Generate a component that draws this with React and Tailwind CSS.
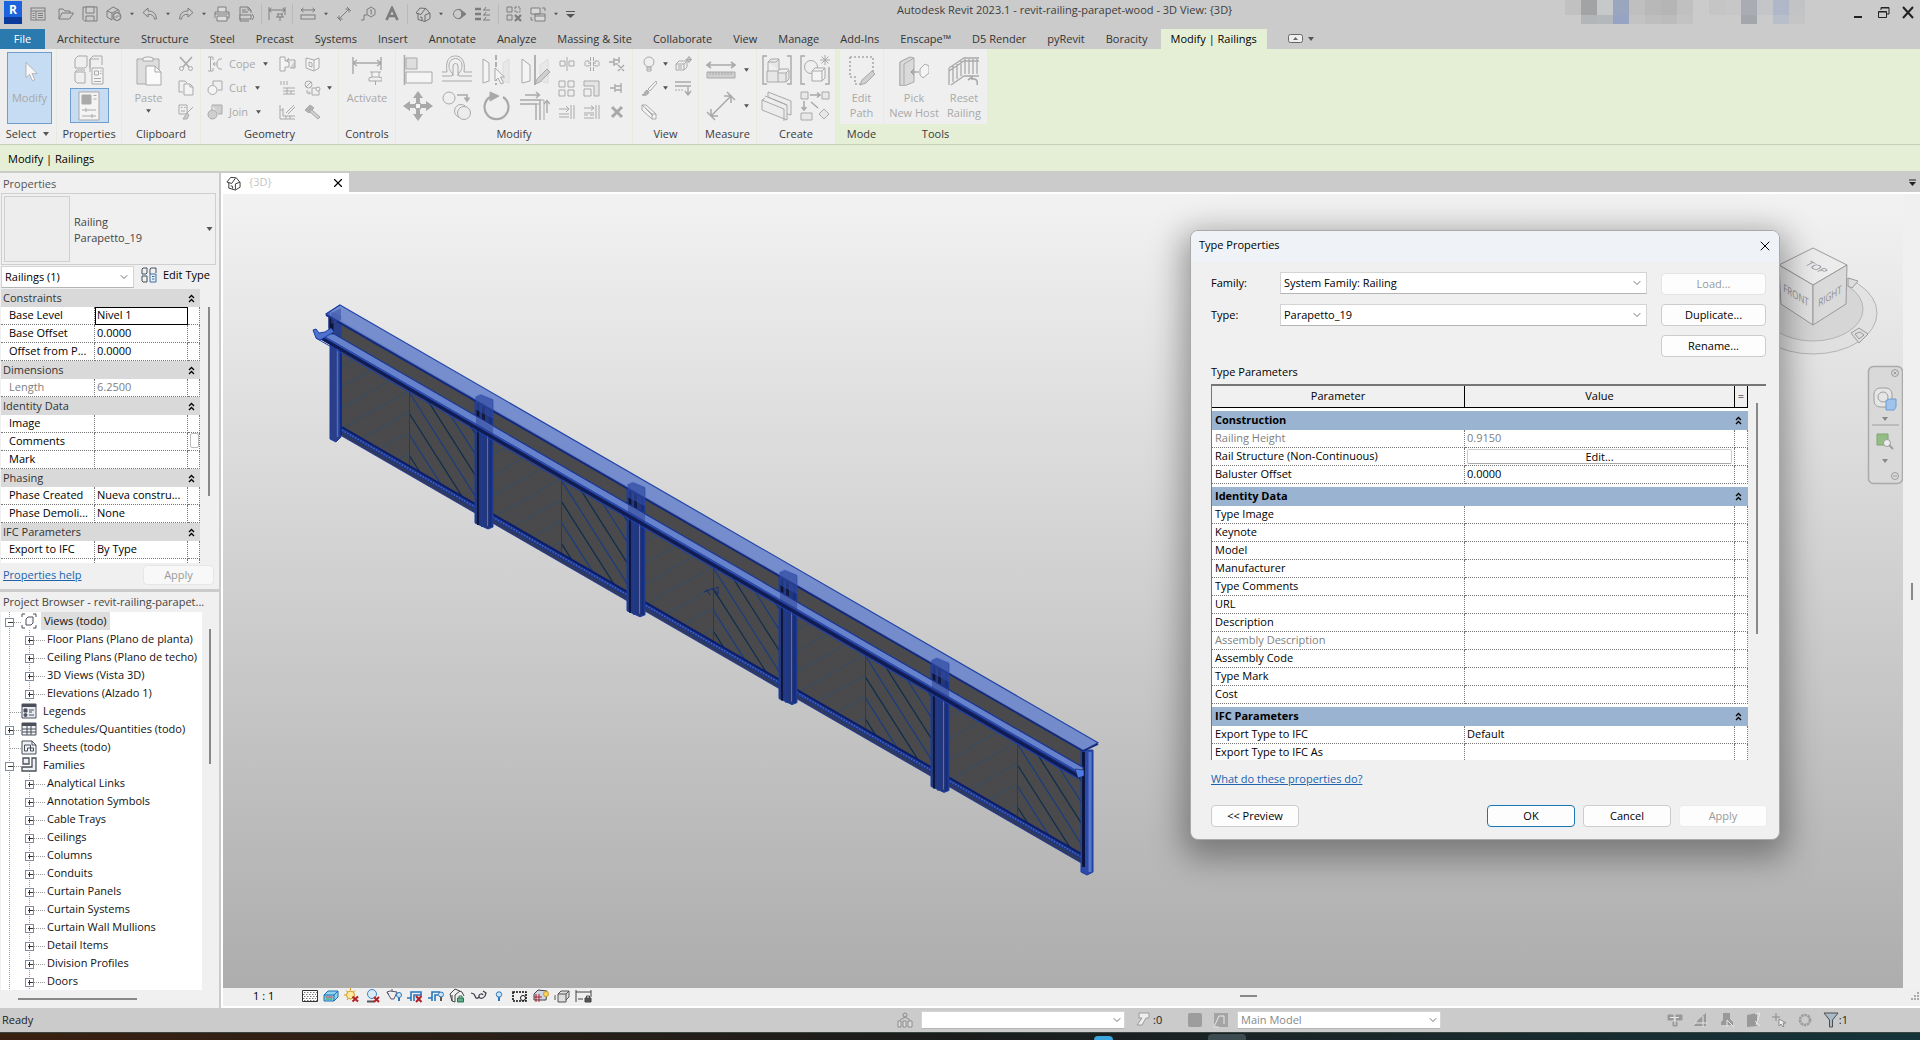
import { ChevronDown, X } from 'lucide-react'

const ui = "font-['Open_Sans','Noto_Sans',sans-serif]"

/* ---------- icons ---------- */

const L = '#f4f4f4'
const M = '#cfcfcf'

const icons = {
  home: [16, 16, <><rect x="1" y="2" width="14" height="12" /><path d="M1 5h14M6 5v9M2.500 7.500h2M2.500 9.500h2M2.500 11.500h2M8 7.500h5M8 9.500h5M8 11.500h5" /></>],
  open: [16, 16, <path d="M1 13V3h4l2 2h5v2M1 13l3-6h11.500l-4 6z" />],
  save: [16, 16, <><path d="M1 1h14v14H2.500L1 13.500z" /><path d="M4 1h8v6H4z" fill={M} /><path d="M4 15v-5h8v5" /></>],
  sync: [16, 16, <><path d="M1 5l6-4 6 3v3M1 5l5 2v7l-5-3zM6 7l6-3" /><circle cx="11" cy="10.500" r="4" fill="#aaa" /><path d="M9 10a2 2 0 013.500-1M13 11a2 2 0 01-3.500 1.200" stroke={L} /></>],
  undo: [16, 16, <path d="M1 6.500L6 2v3c5 0 8 2 8.500 8h-2C12 9.500 10 8.300 6 8.300V11z" />],
  redo: [16, 16, <path d="M15 6.500L10 2v3C5 5 2 7 1.500 13h2C4 9.500 6 8.300 10 8.300V11z" />],
  print: [16, 16, <><path d="M4 6V1h8v5M1 12V6h14v6h-2M3 10h10v5H3z" fill="#dcdcdc" /><path d="M1 8h14" /></>],
  pdf: [16, 16, <><path d="M2 15V1h8l3 3v3M10 1v3h3M4 4h4M4 6h6M2 15h9" /><path d="M2 9h11v4H2zM14 8l2 3-2 3" fill={M} /></>],
  pinDim: [18, 16, <><path d="M1 1v13M17 1v8M1 4h16M3.500 2L1 4l2.500 2M14.500 2L17 4l-2.500 2M9 8h6M10 8v3M14 8v3M8 11h8M12 11v4" /></>],
  rule: [16, 16, <><path d="M1 4h14M3.500 2L1 4l2.500 2M12.500 2L15 4l-2.500 2" /><rect x="1" y="9" width="14" height="4" fill={M} /></>],
  diag: [16, 16, <path d="M3 13L13 3M3 9.500V13h3.500M9.500 3H13v3.500M1 11l4 4M11 1l4 4" />],
  tag: [16, 16, <><path d="M11 1l4 2.500v5L11 11 7 8.500v-5zM1 14h3v-5h3" /><path d="M10 4.500l1.200-.7V8.500" /></>],
  letterA: [16, 16, <path d="M2.500 14L8 2l5.500 12M4.800 10h6.400" strokeWidth="2.600" />],
  house: [16, 16, <><path d="M1 7l4-5 6 .5 4 5v5l-5 3-7-2V7M1 7l5 1.500L10 3M10 15V9l5-2" /><path d="M5 11l2 .5V14" /></>],
  section: [16, 16, <><circle cx="7" cy="8" r="4.500" /><path d="M8.500 3l6.500 5-6.500 5c3-3 3-7 0-10z" fill="currentColor" /></>],
  thin: [16, 16, <><path d="M0 3h6M0 8h6M0 13h6" strokeWidth="2.600" /><path d="M8 4h7M8 9h7M8 14h7M11 1l-2 3M11 6l-2 3M11 11l-2 3" /></>],
  closeHidden: [16, 16, <><path d="M1 1h5v5H1z M1 9h5v5H1z" /><path d="M9 1h5v5H9z" strokeDasharray="2 1" /><path d="M9 9l6 6M15 9l-6 6" strokeWidth="2.200" /></>],
  switchWin: [16, 16, <><path d="M1 2h9v6H1zM5 8h10v7H5z" fill="#d8d8d8" /><path d="M5 10h10M12 2h3v3M1 11v3h2" /></>],
  arrow: [30, 30, <path d="M10 3v19l4.500-4 3.500 8 3-1.500-3.500-7.500H24z" fill="#f7f7f7" />],
  boxes: [30, 30, <><path d="M1 4l3-3h9v10l-2 2H1zM16 4l3-3h9v9M16 4v9M1 17h10v11H3l-2-2zM16 17V4h9" /><path d="M1 17l2-2h8" /><path d="M18 13h11v16H18z" fill={L} /><path d="M20.500 16h4v4h-4zM26 16h1.500M26 18.500h1.500M20 23.500h7M20 26.500h7" /></>],
  sheet: [22, 30, <><path d="M1 1h20v28H1z" fill={L} /><path d="M4 4h9v9H4z" fill="#aaa" /><path d="M15.500 4.500h3M15.500 8h3M4 19h14M8 17v4M4 25h14M14 23v4" /></>],
  paste: [26, 30, <><path d="M1 3h22v25H1z" fill="#dedede" /><path d="M7 5V2l3-1h4l3 1v3z" fill={L} /><path d="M10 10h9l6 6v13H10z" fill="#fafafa" /><path d="M19 10v6h6" /></>],
  cut: [16, 16, <><path d="M2 1l9 10M14 1L5 11" strokeWidth="1.600" /><circle cx="3.500" cy="12.500" r="2" /><circle cx="12.500" cy="12.500" r="2" /></>],
  copyPages: [16, 16, <><path d="M1 12V1h6l2 2M1 12h4" /><path d="M6 4h6l3 3v8H6zM12 4v3h3" fill={L} /></>],
  matchType: [16, 16, <><path d="M1 1h8v9H1zM3 3.500h1.500M3 7h4M6 3.500h1.500" /><path d="M15 3l-6 6M9 9l-4 6h4l2-4z" fill={M} /></>],
  cope: [16, 16, <path d="M1 1h5M1 15h5M3.500 1v14M6 1v3M6 15v-3M15 3h-3l-2 3v4l2 3h3M6 8h4M8 6L6 8l2 2" />],
  cutGeo: [16, 16, <><path d="M6 1h9v9h-4M6 1v4" /><circle cx="5.500" cy="10" r="4.500" fill={L} /></>],
  joinGeo: [16, 16, <><path d="M5 1h10v9h-4M5 1v5" fill={M} /><circle cx="5.500" cy="10.500" r="4.500" fill={M} /></>],
  wallOpen: [17, 16, <><path d="M1 1h5v4h4v6H6v4H1z" fill={L} /><path d="M16 4H8M10 2L7.500 4.500 10 7M16 4v8h-5" fill={M} /></>],
  beam: [17, 16, <path d="M2 1v4M5 1v4M8 1v4M4 8h12M4 11h12M8 8v6M4 14h12M12 11v3" />],
  demolishL: [17, 16, <path d="M1 1v14h15M4 4v8h12M7 9l8-8M9 10l7-7M1 6h3M7 12v3M11 12v3" />],
  wallJoin: [16, 16, <path d="M1 2l8 2v11l-8-3zM9 4l5-2v10l-5 3M4 6l3 1v4l-3-1z" fill={L} />],
  splitFace: [17, 16, <><circle cx="4.500" cy="4.500" r="3.500" /><path d="M2 7l5-5M8 8h7v7H8zM3 10v3h3M5 11.500L6.500 13 5 14.500" /><circle cx="14" cy="9" r="2" fill={L} /></>],
  hammer: [17, 16, <><path d="M1 6l5-5 4 3-5 5z" fill="#b0b0b0" /><path d="M8 6l8 7-2 2-8-7" fill={M} /></>],
  activate: [30, 30, <><path d="M1 1v17M29 1v13M1 7h28M5 4L1 7l4 3M25 4l4 3-4 3" strokeWidth="1.400" /><path d="M18 16h11M20 16v5h7v-5M17 25v-3l3-1M30 25v-3l-3-1M17 25h13M23.500 25v4" fill={L} /></>],
  align: [30, 30, <><path d="M1.500 0v30" strokeWidth="1.600" /><path d="M3 3h11v11H3z" fill="#dedede" /><path d="M3 17h26v11H3z" fill={L} /></>],
  offset: [30, 30, <><path d="M0 21h9c2 0 2-2 1-3-3-3-3-6-3-8a6.500 6.500 0 0113 0c0 2 0 5-3 8-1 1-1 3 1 3h12" /><path d="M0 26h30" /><path d="M0 17h5c-2-14 4-16 8.500-16S24 4 22 17h8" /><path d="M11 21V11a2.500 2.500 0 015 0v10" /></>],
  mirrorPick: [30, 30, <><path d="M2 4l6 4v18l-6 2z" fill={L} /><path d="M28 4l-6 4v18l6 2z" stroke="#dcdcdc" fill="#e8e8e8" /><path d="M15 0v30" strokeWidth="1.800" strokeDasharray="5 2" /><path d="M14 13v13l3-3 3 6 2.500-1-3-6h4z" fill={L} /></>],
  mirrorDraw: [30, 30, <><path d="M2 4l8 6v16l-8 2z" fill={L} /><path d="M28 4l-8 6v16l8 2z" stroke="#dcdcdc" fill="#e8e8e8" /><path d="M15 0v30" strokeWidth="1.800" /><path d="M15 29l2-5 10-10 3 3-10 10z" fill={M} /></>],
  move: [30, 30, <><path d="M15 0l5 7h-3v5h-4V7h-3zM15 30l5-7h-3v-5h-4v5h-3zM0 15l7-5v3h5v4H7v3zM30 15l-7-5v3h-5v4h5v3z" fill="currentColor" stroke="none" /><rect x="12.500" y="12.500" width="5" height="5" fill={L} /></>],
  copy: [30, 30, <><circle cx="7" cy="7" r="6" /><circle cx="19" cy="20" r="6.500" /><circle cx="22" cy="22" r="6.500" fill="#ececec" /><path d="M15 4h10v5M22.500 6.500L25 10l2.500-3.500" strokeWidth="1.600" /></>],
  rotate: [30, 30, <><path d="M9 6A12 12 0 1022 6" strokeWidth="2.200" /><path d="M9 1l9 4-9 5z" fill="currentColor" /></>],
  trim: [30, 30, <><path d="M0 9h20v20M0 13h16v16" strokeWidth="1.400" /><path d="M5 4h14M16 1l3.500 3L16 7M27 22V10M24 13l3-3.500 3 3.500" strokeWidth="1.400" /><path d="M20 9h4v20M16 13h4" /></>],
  splitEl: [16, 16, <path d="M1 5h5v5H1zM10 5h5v5h-5zM8 1v14" />],
  splitGap: [16, 16, <path d="M5 5H1v5h4zM11 5h4v5h-4zM6.500 1v14M9.500 1v14" strokeDasharray="4 1" />],
  unpin: [17, 16, <path d="M1 6h5M6 2v8M6 4h5M6 8h4M11 1v6M10 9l6 6M16 9l-6 6" strokeWidth="1.400" />],
  array: [17, 17, <path d="M1 1h6v6H1zM10 1h6v6h-6zM1 10h6v6H1zM10 10h6v6h-6z" />],
  scale: [17, 17, <><path d="M1 1h15v15h-5V6H1z" fill="#e4e4e4" /><path d="M1 9h7v7H1z" /></>],
  pin: [16, 16, <path d="M1 8h5M6 4v8M6 6h6M6 10h6M12 3v10" strokeWidth="1.300" />],
  trim1: [17, 16, <path d="M1 5h10M8 2l3 3-3 3M13 1v14M16 1v14M1 10h10M1 13h10" />],
  trimN: [17, 16, <path d="M1 4h10M8 1.500L11 4 8 6.500M13 1v14M16 1v14M1 9h10M1 11h4M7 11h4M1 14h10" />],
  del: [16, 16, <path d="M3 3l10 10M13 3L3 13" strokeWidth="3" />],
  bulb: [16, 16, <><circle cx="8" cy="6" r="5" /><path d="M6 11h4v4H6zM6 13h4" /></>],
  brush: [16, 16, <><path d="M15 1l-8 8 2 2 7-8z" fill={L} /><path d="M1 15c3 0 2-4 5-5l2 2c-1 3-4 4-7 3z" fill="#b0b0b0" /></>],
  displace: [17, 16, <><path d="M1 8l3-3h8v6l-3 3H1zM1 8h8v6M9 8l3-3M4 9v4M6 9v4" /><circle cx="14" cy="3.500" r="2" /><path d="M14 0v7M10.500 3.500H17" /></>],
  lineWork: [17, 16, <><path d="M0 2h16M0 6h16" strokeWidth="1.600" /><path d="M0 10h8" strokeDasharray="2 1" /><path d="M13 7v7M10 11l3 4 3-4" strokeWidth="1.400" /></>],
  beamBox: [16, 16, <><path d="M1 1h4l10 9v5h-4L1 6z" fill={L} /><path d="M1 1l10 9h4M11 10v5M4 4l8 8" /></>],
  measure: [30, 18, <><path d="M1 4h28M5 1L1 4l4 3M25 1l4 3-4 3" strokeWidth="1.600" /><path d="M1 11h28v6H1z" fill={M} /><path d="M4 11v3M7 11v3M10 11v3M13 11v3M16 11v3M19 11v3M22 11v3M25 11v3" /></>],
  bigDiag: [30, 30, <path d="M6 24L24 6M5 18v7h7M18 5h7v7M1 21l8 8M21 1l8 8" strokeWidth="1.500" />],
  group: [30, 30, <><path d="M5 1H1v28h4M25 1h4v28h-4" strokeWidth="1.400" /><path d="M6 7l3-3h8v11M6 7v9M6 7h8l3-3M5 16h11v11H5zM16 18h8v9h-8M24 18l3-3v9l-3 3M16 16l2-2h9" fill="#e6e6e6" /></>],
  assembly: [30, 30, <><path d="M5 1H1v28h4M25 29h4V12" strokeWidth="1.400" /><circle cx="11" cy="12" r="6.500" /><path d="M12 16l3-3h10v10l-3 3H12z" fill={L} /><path d="M12 16h10v10M22 16l3-3" /><path d="M25 0v10M20 5h10M21.500 1.500l7 7M28.500 1.500l-7 7" /></>],
  parts: [32, 30, <path d="M7 1l23 9v14l-4-1M7 1v5l19 8v15L1 19V9l22 9v12M1 9l3-2M4 5l22 9" fill="#ececec" />],
  similar: [30, 30, <><path d="M1 1h7v7H1zM22 1h7v7h-7zM1 22h11v7H1zM24 18l5 5-5 5-5-5z" fill="#e8e8e8" /><path d="M10 4h10M17 1.500L20 4l-3 2.500M4 10v9M1.500 16L4 19l2.500-3M11 11l7 6" strokeWidth="1.500" /></>],
  editPath: [26, 30, <><path d="M1 1h23v20M1 1v20h5v7h7" strokeDasharray="2 2" strokeWidth="1.600" /><path d="M11 29l2-5 10-9 3 3-9 9z" fill={M} /></>],
  pickHost: [30, 30, <><path d="M1 6l10-5v24l-10 5z" fill="#b8b8b8" /><path d="M1 6L11 1l4 1v24L5 30 1 29zM5 8v21M5 8l10-6" fill="#dadada" /><path d="M12 16h8M15 13l-3 3 3 3" stroke="#8f8f8f" /><path d="M21 13l5-5 4 2v7l-6 5-3-3z" fill={L} /></>],
  resetRail: [32, 30, <><path d="M1 12L16 2h15M1 15L16 5h15M1 29V12M5 26V10M9 23V8M13 20V5M17 18V3M21 18V3M25 18V3M29 18V3M3 29l13-9h15" strokeWidth="1.300" /><path d="M20 24l4-3v2c5-1 6 3 5 6" strokeWidth="1.600" /></>],
  editType: [16, 16, <><path d="M1 2l1-1h4v5L5 7H1zM9 2l1-1h5v5M9 7V2M1 9h5v6H2l-1-1z" stroke="#44515f" /><path d="M9 7h6v8H9z" fill="#e6f1fb" stroke="#3c6c9c" /><path d="M11 9.500h2.500M11 12h2.500" stroke="#3c6c9c" /></>],
  views: [16, 16, <path d="M1 4V1h3M12 1h3v3M1 12v3h3M12 15h3v-3M5 6l2-2h5v6l-2 2H5z" />],
  legends: [16, 16, <><path d="M1 1h14v14H1z" fill="#e8ecf2" /><path d="M1 2.500h14" strokeWidth="3" /><path d="M3 6h3v3H3z" fill="#556" /><circle cx="4.500" cy="12" r="1.500" fill="#556" /><path d="M8 7h5M8 9h3M8 12h5" /></>],
  schedules: [16, 16, <><path d="M1 2h14v12H1z" fill="#eef1f5" /><path d="M1 3.500h14" strokeWidth="3" /><path d="M1 8h14M1 11h14M6 5v9M10 5v9" /></>],
  sheets: [16, 16, <path d="M1 2h10l4 4v9H1zM11 2v4h4M3.500 6h6v3h-3v3h-3zM9.500 12V9h3v3z" fill="#eef1f5" />],
  families: [16, 16, <path d="M2 1h6v6H2zM11 1h4v13H1v-4h10z" fill="#eef1f5" strokeWidth="1.300" />],
  graphic: [16, 16, <><path d="M.5 2.500h15v11H.5z" fill="#fff" stroke="#333" /><path d="M2 4.500h13M1 6.500h13M2 8.500h13M1 10.500h13M2 12.500h13" stroke="#777" strokeDasharray="1.500 1.500" /></>],
  style: [16, 16, <><path d="M1 7l4-4h10v6l-4 4H1z" fill="#8fd3ef" stroke="#1d6fb0" /><path d="M1 7h10v6M11 7l4-4" stroke="#1d6fb0" /><path d="M2.500 9h7" stroke="#d33" /><path d="M2.500 11h7" stroke="#2a4" /></>],
  sun: [16, 16, <><circle cx="6.500" cy="7" r="4" fill="#fde9a0" stroke="#d19a1c" /><path d="M6.500 0v2M0 7h2M2 2.500L3.500 4M11 2.500L9.500 4M3 12l1-1.500" stroke="#d19a1c" /><path d="M8.500 8.500l5.500 5M14 8.500l-5.500 5" stroke="#b3202a" strokeWidth="2" /></>],
  shadow: [16, 16, <><circle cx="7" cy="6" r="4.500" fill="#d9eaf8" stroke="#3b82c4" /><path d="M2 13.500h7" stroke="#555" strokeWidth="2" /><path d="M9 9l5 5M14 9l-5 5" stroke="#b3202a" strokeWidth="2" /></>],
  render: [17, 16, <><path d="M1 4l3-1 7 1-3 7H5zM1 4l2 3M6 1v2" stroke="#556" /><circle cx="13" cy="7" r="2.500" fill="#cfe6f8" stroke="#2878bd" /><path d="M12 10h2v3h-2z" fill="#2878bd" stroke="none" /></>],
  cropX: [16, 16, <><path d="M0 10h4v3M4 13V4h10v3M7 13V7h8" stroke="#2878bd" strokeWidth="1.600" /><path d="M9 8l5.500 6M14.500 8L9 14" stroke="#b3202a" strokeWidth="2" /></>],
  cropB: [16, 16, <><path d="M0 10h4v3M4 13V4h8M7 13V7h3" stroke="#2878bd" strokeWidth="1.600" /><circle cx="13" cy="6.500" r="2.500" fill="#cfe6f8" stroke="#2878bd" /><path d="M13 9v4" stroke="#555" strokeWidth="2" /></>],
  lockView: [16, 16, <><path d="M1 6l5-5 7 3 2 4M1 6l2 7 3 1V7l5-4M3 7v6" stroke="#444" /><path d="M8.500 10h6v4h-6z" fill="#5fae8c" stroke="#2f6f55" /><path d="M10 10V8h3v2" stroke="#2f6f55" /></>],
  glasses: [17, 16, <path d="M1 5l3 1M4 6l2 4c2 1 3-1 3-2M9 8c0-2 3-3 4-1M9 9c1 2 4 2 6-1l1-3-3-2" stroke="#445" strokeWidth="1.300" />],
  tip: [16, 16, <><circle cx="8" cy="6.500" r="2.700" fill="#cfe6f8" stroke="#2878bd" /><path d="M8 9v4" stroke="#2878bd" strokeWidth="2" /></>],
  analytic: [16, 16, <><path d="M1 4h13v9H1z" stroke="#111" strokeDasharray="2 1" strokeWidth="1.600" /><circle cx="11" cy="10" r="2.500" stroke="#111" fill="#fff" /></>],
  displaceSet: [17, 16, <><path d="M1 6l4-4 9 1-1 9H1z" stroke="#444" fill="#cdd6e4" /><path d="M3 6v8M6 6v8M1 9h8" stroke="#b3202a" /><circle cx="13" cy="6" r="2.500" fill="#f8d568" stroke="#d19a1c" /></>],
  constraint: [16, 16, <path d="M4 6l3-3h8v6l-3 3M4 6h8v8H4zM12 6l3-3M1 7v5" stroke="#555" fill="#ddd" />],
  dimLock: [17, 16, <><path d="M1 2v12M1 4h15M16 2v7M3 11h5" stroke="#444" /><path d="M10 10h6v4h-6z" fill="#555" stroke="#444" /><path d="M11.500 10V8h3v2" stroke="#444" /></>],
  people: [16, 16, <><path d="M1 15V9h3v6zM6 15V9h3v6zM11 15V9h4v6z" fill="#ddd" stroke="#8c8c8c" /><circle cx="8" cy="3" r="2" stroke="#8c8c8c" /><path d="M3 8l5-3 5 3" stroke="#8c8c8c" /></>],
  request: [16, 16, <path d="M4 1h10v5h-3l-4 7H2l5-7H4z" fill="#eee" stroke="#9a9a9a" />],
  block: [16, 16, <rect x="1" y="1" width="14" height="14" rx="2" fill="#9d9d9d" stroke="none" />],
  blockOut: [16, 16, <><rect x="1" y="1" width="14" height="14" fill="#a4a4a4" stroke="none" /><path d="M6 4h5v8M6 4L1 15h5" stroke="#e8e8e8" /></>],
  selLink: [16, 16, <><path d="M1 3h5v5H1zM9 3h6v5H9zM6 10h4v4H6z" fill="#999" stroke="#999" /><path d="M3 5.500h9M8 6v7" stroke="#e8e8e8" /></>],
  selUnder: [16, 16, <><path d="M1 14l4-6 8-7v13z" fill="#999" stroke="none" /><path d="M2 11h12M10 4v11" stroke="#e8e8e8" /></>],
  selPin: [16, 16, <><path d="M4 1h7v6l3 3v3H2v-3l2-2z" fill="#999" stroke="none" /><path d="M8 8l7 7M8 8v7" stroke="#e8e8e8" /></>],
  selFace: [16, 16, <><path d="M2 3l10-2v13l-10 1z" fill="#999" stroke="none" /><path d="M10 2l5-1-4 12M10 9l5 5" stroke="#e8e8e8" /></>],
  drag: [16, 16, <path d="M5 1v8M1 5h8M8 7v7l2-2 2 3 1-1-1-3h3z" stroke="#8c8c8c" fill="#f0f0f0" />],
  gear: [16, 16, <circle cx="8" cy="8" r="5" stroke="#9c9c9c" strokeWidth="2.600" strokeDasharray="2.500 .7" />],
  funnel: [16, 16, <path d="M1 1h14L9.500 8v7h-3V8z" fill="#a9bac9" stroke="#4c4c4c" />],
}

function Ico({ n, className = '' }) {
  const [w, h, body] = icons[n]
  return (
    <svg width={w} height={h} viewBox={`0 0 ${w} ${h}`} fill="none" stroke="currentColor" className={`shrink-0 ${className}`}>
      {body}
    </svg>
  )
}

const Caret = ({ className = '' }) => (
  <svg width="6" height="4" viewBox="0 0 6 4" className={`shrink-0 ${className}`}><path d="M0 0h6L3 4z" fill="#555" /></svg>
)

const Chevrons = () => (
  <svg width="7" height="9" viewBox="0 0 7 9" fill="none" stroke="#000" strokeWidth="1.300"><path d="M1 4l2.500-2.500L6 4M1 8l2.500-2.500L6 8" /></svg>
)

/* ---------- title bar and tabs ---------- */

const quick = ['home', 'gap', 'open', 'save', 'sync', 'v', 'undo', 'v', 'redo', 'v', 'print', 'pdf', '|', 'pinDim', '|', 'rule', 'v', 'diag', 'tag', 'letterA', '|', 'house', 'v', 'section', 'thin', '|', 'closeHidden', 'switchWin', 'v']

const pixels = [
  ['bg-[#c1c1c1]', 'bg-transparent'], ['bg-[#a1a3a4]', 'bg-[#b3b6b8]'], ['bg-[#c6c9ca]', 'bg-[#b3b8bb]'],
  ['bg-[#9aa5be]', 'bg-[#96a3c2]'], ['bg-[#bfbfbf]', 'bg-[#c3c3c3]'], ['bg-[#b8b8b8]', 'bg-[#bebebe]'],
  ['bg-[#b5b5b5]', 'bg-[#bcbcbc]'], ['bg-[#c0c0c0]', 'bg-[#c3c3c3]'], ['bg-transparent', 'bg-transparent'],
  ['bg-[#c5c5c5]', 'bg-transparent'], ['bg-[#c7c7c7]', 'bg-transparent'], ['bg-[#a9adb3]', 'bg-[#a3a7ab]'],
  ['bg-[#c4c5c8]', 'bg-transparent'], ['bg-[#b0b7c8]', 'bg-[#b9bfca]'], ['bg-[#c2c3c5]', 'bg-[#c5c5c5]'],
]

function TitleBar() {
  return (
    <header className="flex h-[29px] shrink-0 items-start">
      <div className="flex w-[897px] shrink-0 items-center gap-2 pt-1 text-[#7c7c7c]">
        <div className="ml-1 -mt-1 flex h-[23px] w-[18px] justify-center bg-linear-to-b from-[#1c63e0] from-70% to-[#0b3c9c] to-70% text-[12px] leading-[18px] font-bold text-white">R</div>
        {quick.map((q, i) => {
          if (q === 'v') return <Caret key={i} className="w-1" />
          if (q === '|') return <span key={i} className="-mx-px h-5 w-px bg-[#b9b9b9]" />
          if (q === 'gap') return <span key={i} className="-mx-0.5" />
          return (
            <button key={i} aria-label={q} className="flex w-4 justify-center"><Ico n={q} className={q === 'house' ? 'text-[#6d6d6d]' : ''} /></button>
          )
        })}
        <button aria-label="Customize toolbar"><svg width="9" height="7"><path d="M0 .5h9" stroke="#555" /><path d="M0 3h9L4.500 7z" fill="#555" /></svg></button>
      </div>
      <h1 className="pt-0.5 text-[11px] leading-[16px] text-[#3d3d3d]">Autodesk Revit 2023.1 - revit-railing-parapet-wood - 3D View: {'{3D}'}</h1>
      <div className="flex flex-1 items-start justify-end">
        <div className="mr-12 flex">
          {pixels.map(([a, b], i) => (
            <div key={i} className="w-4"><div className={`h-[15px] ${a}`} /><div className={`h-[9px] ${b}`} /></div>
          ))}
        </div>
        <div className="flex items-center gap-3 pt-1.5 pr-1.5 text-[#222]">
          <button aria-label="Minimize"><svg width="12" height="13"><path d="M1 11h8" stroke="currentColor" strokeWidth="2" /></svg></button>
          <button aria-label="Restore"><svg width="13" height="13" fill="none" stroke="currentColor"><path d="M4 4V1.500h8V8H9.500M4 2h8M1.500 5.500h8v6h-8zM1.500 6h8" /></svg></button>
          <button aria-label="Close"><svg width="12" height="13"><path d="M1 1l10 11M11 1L1 12" stroke="currentColor" strokeWidth="2" /></svg></button>
        </div>
      </div>
    </header>
  )
}

const tabs = ['Architecture', 'Structure', 'Steel', 'Precast', 'Systems', 'Insert', 'Annotate', 'Analyze', 'Massing & Site', 'Collaborate', 'View', 'Manage', 'Add-Ins', 'Enscape™', 'D5 Render', 'pyRevit', 'Boracity']

function Tabs() {
  return (
    <nav className="flex h-5 shrink-0 gap-px text-[11px] leading-5 text-[#333]">
      <button className="mr-px w-[45px] bg-[#2a7ab0] text-white">File</button>
      {tabs.map((t) => <button key={t} className="px-2.5">{t}</button>)}
      <button className="ml-0.5 bg-[#e5efd6] px-2.5 text-black">Modify | Railings</button>
      <button aria-label="Ribbon display" className="ml-5 flex items-center gap-1">
        <svg width="16" height="10" fill="none" stroke="#666"><rect x=".5" y=".5" width="14" height="8" rx="2" fill="#eee" /><path d="M5 6l2.500-3L10 6z" fill="#666" stroke="none" /></svg>
        <Caret />
      </button>
    </nav>
  )
}

/* ---------- ribbon ---------- */

function Panel({ label, width, children, green, arrow }) {
  return (
    <section className={`flex flex-col ${width} ${green ? '' : 'border-r border-[#e6ebdf] bg-[#efefef]'}`}>
      <div className={`flex h-[75px] pt-[3px] text-[#a9a9a9] ${green ? 'bg-[#efefef]' : ''}`}>{children}</div>
      <div className="flex items-center justify-center gap-1.5 leading-[19px] text-[#3b3b3b]">{label}{arrow && <Caret className="w-2" />}</div>
    </section>
  )
}

// a column of two large icons or three small ones; "v" after a name adds a menu caret
function Col({ names, width, big }) {
  return (
    <div className={`flex flex-col ${width}`}>
      {names.map((n) => {
        const [id, v] = n.split(' ')
        return (
          <button key={id} aria-label={id} className={`flex items-center justify-center gap-2 ${big ? 'h-9' : 'h-6'}`}>
            <Ico n={id} />{v && <Caret className="w-[5px]" />}
          </button>
        )
      })}
    </div>
  )
}

function Big({ icon, lines, width, caret }) {
  return (
    <button className={`flex flex-col items-center leading-[15px] ${width}`}>
      <span className="flex h-[38px] items-center"><Ico n={icon} /></span>
      {lines.map((l) => <span key={l} className="whitespace-nowrap">{l}</span>)}
      {caret && <Caret className="mt-1 w-[5px]" />}
    </button>
  )
}

function Ribbon() {
  return (
    <div className="flex h-[96px] shrink-0 border-b border-[#c6cfba] bg-[#e5efd6] text-[11px]">
      <Panel label="Select" width="w-[57px]" arrow>
        <button className="ml-[7px] flex h-[72px] w-[45px] flex-col items-center border border-[#6f9dcd] bg-[#c5dcf2] leading-[15px]">
          <span className="flex h-[37px] items-center"><Ico n="arrow" className="w-[24px]" /></span>Modify
        </button>
      </Panel>
      <Panel label="Properties" width="w-[65px]">
        <div className="flex flex-1 flex-col items-center">
          <button aria-label="Type properties" className="flex h-9 items-center"><Ico n="boxes" /></button>
          <button aria-label="Properties palette" className="flex h-[35px] w-[39px] items-center justify-center border border-[#6f9dcd] bg-[#c5dcf2]"><Ico n="sheet" /></button>
        </div>
      </Panel>
      <Panel label="Clipboard" width="w-[79px]">
        <Big icon="paste" lines={['Paste']} width="ml-[5px] w-[43px]" caret />
        <Col names={['cut', 'copyPages', 'matchType']} width="ml-2 w-4" />
      </Panel>
      <Panel label="Geometry" width="w-[138px]">
        <div className="ml-1.5 flex w-[72px] flex-col">
          {[['cope', 'Cope'], ['cutGeo', 'Cut'], ['joinGeo', 'Join']].map(([n, t]) => (
            <button key={t} className="flex h-6 items-center"><Ico n={n} /><span className="ml-1.5">{t}</span><Caret className="ml-2 w-[5px]" /></button>
          ))}
        </div>
        <Col names={['wallOpen', 'beam', 'demolishL']} width="w-[17px]" />
        <Col names={['wallJoin', 'splitFace', 'hammer']} width="ml-2 w-[17px]" />
        <button aria-label="Paint options" className="ml-1.5 flex h-[72px] items-center"><Caret className="w-[5px]" /></button>
      </Panel>
      <Panel label="Controls" width="w-[57px]"><Big icon="activate" lines={['Activate']} width="w-full" /></Panel>
      <Panel label="Modify" width="w-[237px]">
        <Col big names={['align', 'move']} width="ml-0.5 w-[39px]" />
        <Col big names={['offset', 'copy']} width="w-[39px]" />
        <Col big names={['mirrorPick', 'rotate']} width="w-[39px]" />
        <Col big names={['mirrorDraw', 'trim']} width="w-[39px]" />
        <Col names={['splitEl', 'array', 'trim1']} width="w-[25px]" />
        <Col names={['splitGap', 'scale', 'trimN']} width="w-[25px]" />
        <Col names={['unpin', 'pin', 'del']} width="w-[25px]" />
      </Panel>
      <Panel label="View" width="w-[66px]">
        <div className="flex w-[42px] flex-col items-start pl-2">
          {['bulb', 'brush', 'beamBox'].map((n, i) => (
            <button key={n} aria-label={n} className="flex h-6 items-center gap-1.5"><Ico n={n} />{i < 2 && <Caret className="w-[5px]" />}</button>
          ))}
        </div>
        <Col names={['displace', 'lineWork']} width="w-[17px]" />
      </Panel>
      <Panel label="Measure" width="w-[58px]"><Col big names={['measure v', 'bigDiag v']} width="w-full" /></Panel>
      <Panel label="Create" width="w-[79px]">
        <Col big names={['group', 'parts']} width="ml-px w-[38px]" />
        <Col big names={['assembly', 'similar']} width="w-[38px]" />
      </Panel>
      <div className="w-1" />
      <Panel green label="Mode" width="w-[43px]"><Big icon="editPath" lines={['Edit', 'Path']} width="w-full" /></Panel>
      <div className="w-px" />
      <Panel green label="Tools" width="w-[103px]">
        <Big icon="pickHost" lines={['Pick', 'New Host']} width="w-[60px]" />
        <Big icon="resetRail" lines={['Reset', 'Railing']} width="w-[40px]" />
      </Panel>
    </div>
  )
}

/* ---------- left palettes ---------- */

const props = [
  ['Constraints'], ['Base Level', 'Nivel 1'], ['Base Offset', '0.0000'], ['Offset from P...', '0.0000'],
  ['Dimensions'], ['Length', '6.2500'],
  ['Identity Data'], ['Image', ''], ['Comments', ''], ['Mark', ''],
  ['Phasing'], ['Phase Created', 'Nueva constru...'], ['Phase Demoli...', 'None'],
  ['IFC Parameters'], ['Export to IFC', 'By Type'], ['', ''],
]

const cell = 'border-r border-b border-dotted border-[#777] p-0 align-top leading-[15px] whitespace-nowrap'

function Select({ label, options, className, chevron = 'right-1.5' }) {
  return (
    <div className={`relative ${className}`}>
      <select aria-label={label} className="size-full appearance-none border border-[#d4d4d4] border-b-[#b5b5b5] bg-white pl-[3px]">
        {options.map((o) => <option key={o}>{o}</option>)}
      </select>
      <ChevronDown size={12} strokeWidth={1.500} className={`pointer-events-none absolute top-1/2 -translate-y-1/2 text-[#444] ${chevron}`} />
    </div>
  )
}

function Properties() {
  return (
    <section className="flex h-[416px] shrink-0 flex-col">
      <h2 className="h-5 pl-[3px] leading-[21px] text-[#555]">Properties</h2>
      <button className="mx-px mr-[3px] flex h-[72px] items-center border border-[#cfcfcf] text-left text-[#444]">
        <span className="ml-0.5 size-[66px] border border-[#cfcfcf] bg-[#ededed]" />
        <span className="ml-1 flex-1 pt-0.5 leading-4">Railing<br />Parapetto_19</span>
        <Caret className="mr-0.5 w-[7px]" />
      </button>
      <div className="flex h-6 items-center">
        <Select label="Element filter" options={['Railings (1)']} className="ml-px h-[22px] w-[133px]" chevron="right-1" />
        <button className="ml-[7px] flex items-center gap-1.5 pb-1 text-black"><Ico n="editType" />Edit Type</button>
      </div>
      <div className="flex h-[274px] overflow-hidden">
        <table className="ml-px w-[199px] table-fixed border-separate border-spacing-0 self-start bg-white">
          <colgroup><col className="w-[94px]" /><col className="w-[93px]" /><col className="w-3" /></colgroup>
          <tbody>
            {props.map(([k, v], i) => v === undefined ? (
              <tr key={i} className="h-[18px] bg-[#d9d9d9]">
                <th colSpan={2} className="p-0 pl-0.5 text-left align-top leading-[17px] font-normal text-[#333]">{k}</th>
                <td className="p-0"><button aria-label={`Collapse ${k}`} className="flex items-center"><Chevrons /></button></td>
              </tr>
            ) : (
              <tr key={i} className={`h-[18px] ${k === 'Length' ? 'text-[#808080]' : 'text-black'}`}>
                <td className={`${cell} pl-2`}>{k}</td>
                <td className={`pl-0.5 ${v === 'Nivel 1' ? 'border border-black p-0 pl-px align-top leading-[14px]' : cell}`}>{v}</td>
                <td className={cell}>
                  {k === 'Comments' && <button aria-label="Edit comments" className="ml-0.5 block h-[15px] w-[9px] rounded-xs border border-[#bbb]" />}
                </td>
              </tr>
            ))}
          </tbody>
        </table>
        <div className="mt-[18px] ml-2 h-[189px] w-0.5 bg-[#888]" />
      </div>
      <div className="flex h-[24px] items-center justify-between pr-[5px] pl-[3px]">
        <a href="#help" className="text-[#2063ad] underline">Properties help</a>
        <button disabled className="h-5 w-[71px] rounded-sm border border-[#e6e6e6] bg-[#f8f8f8] leading-[18px] text-[#999]">Apply</button>
      </div>
    </section>
  )
}

const tree = [
  [0, '-', 'Views (todo)', 'views'], [1, '+', 'Floor Plans (Plano de planta)'], [1, '+', 'Ceiling Plans (Plano de techo)'],
  [1, '+', '3D Views (Vista 3D)'], [1, '+', 'Elevations (Alzado 1)'], [0, '', 'Legends', 'legends'],
  [0, '+', 'Schedules/Quantities (todo)', 'schedules'], [0, '', 'Sheets (todo)', 'sheets'], [0, '-', 'Families', 'families'],
  [1, '+', 'Analytical Links'], [1, '+', 'Annotation Symbols'], [1, '+', 'Cable Trays'], [1, '+', 'Ceilings'],
  [1, '+', 'Columns'], [1, '+', 'Conduits'], [1, '+', 'Curtain Panels'], [1, '+', 'Curtain Systems'],
  [1, '+', 'Curtain Wall Mullions'], [1, '+', 'Detail Items'], [1, '+', 'Division Profiles'], [1, '+', 'Doors'],
]

// dotted connectors with the expander box
function Branch({ level, sign }) {
  const x = level ? 28.5 : 8.5
  return (
    <svg width={level ? 45 : 20} height="18" fill="none" shapeRendering="crispEdges" className="shrink-0">
      <g stroke="#999" strokeDasharray="1 1">
        <path d="M8.500 0v18" />
        {level > 0 && <path d="M28.500 0v18" />}
        <path d={`M${x} 10.500h${level ? 15 : 11}`} />
      </g>
      {sign && <g stroke="#7f8c9c"><rect x={x - 4} y="6.500" width="8" height="8" fill="#fff" /></g>}
      {sign && <path d={`M${x - 2} 10.500h5${sign === '+' ? `M${x} 8v5` : ''}`} stroke="#333" />}
    </svg>
  )
}

function Browser() {
  return (
    <section className="flex min-h-0 flex-1 flex-col border-t-[3px] border-[#cbcbcb]">
      <h2 className="h-5 shrink-0 truncate pl-[3px] leading-5 text-[#444]">Project Browser - revit-railing-parapet...</h2>
      <div className="flex min-h-0 flex-1">
        <ul className="ml-px w-[201px] overflow-hidden bg-white pr-1">
          {tree.map(([level, sign, text, icon], i) => (
            <li key={text} className="flex h-[18px] overflow-hidden leading-[17px] whitespace-nowrap text-[#111]">
              <Branch level={level} sign={sign} />
              {icon && <Ico n={icon} className="mt-px text-[#4a4f58]" />}
              <span className={i === 0 ? 'ml-1 bg-[#dedede] px-[3px]' : level ? 'ml-px' : 'ml-1.5'}>{text}</span>
            </li>
          ))}
        </ul>
        <div className="mt-[17px] ml-[7px] h-[135px] w-0.5 bg-[#888]" />
      </div>
      <div className="flex h-[18px] shrink-0 items-center pl-[18px]"><div className="h-0.5 w-[119px] bg-[#888]" /></div>
    </section>
  )
}

/* ---------- 3D view ---------- */

// the rail runs at 30 degrees: 152 across and 88 down for each bay
const at = (x, c) => `${x},${(c + (x - 340) * 0.5774).toFixed(1)}`
const band = (x1, x2, c1, c2) => `${at(x1, c1)} ${at(x2, c1)} ${at(x2, c2)} ${at(x1, c2)}`
const bays = [0, 1, 2, 3, 4]

function Post({ x, y }) {
  return (
    <g transform={`translate(${x} ${y})`}>
      <path d="M0 3L5 0l13 5v128l-5 2-13-6z" fill="#24377a" stroke="#1b3da0" />
      <path d="M3 3v128" stroke="#0d1840" strokeWidth="2" />
      <path d="M7 4v129" stroke="#1d3a92" strokeWidth="2" />
      <path d="M12.500 40v92" stroke="#4472dc" />
      <path d="M15.500 5v128" stroke="#142c80" strokeWidth="2" />
      <path d="M3 5v30M8.500 8v30" stroke="#0d1536" strokeWidth="3" strokeOpacity=".8" />
    </g>
  )
}

function Railing() {
  return (
    <g>
      <defs>
        <clipPath id="bayLeft"><polygon points={band(342, 409, 345, 428)} /></clipPath>
        <clipPath id="bayRight"><polygon points={band(409, 476, 345, 428)} /></clipPath>
      </defs>
      <polygon points={band(334, 1084, 320, 432)} fill="#4a4a4c" />
      {bays.map((b) => (
        <g key={b} transform={`translate(${b * 152} ${b * 87.8})`}>
          <g clipPath="url(#bayLeft)" stroke="#1e4f80" strokeOpacity=".5">
            {[0, 1, 2, 3, 4, 5, 6, 7, 8].map((k) => <path key={k} d={`M342 ${366 + k * 21}l70 -40`} />)}
          </g>
          <g clipPath="url(#bayRight)" strokeWidth="1.200">
            {[-5, -4, -3, -2, -1, 0, 1, 2, 3].map((k) => <path key={k} d={`M409 ${392 + k * 21}l70 110`} stroke={k % 2 ? '#0b2c4c' : '#183c80'} />)}
          </g>
          <path d="M409.500 388v80" stroke="#0c4470" />
        </g>
      ))}
      {/* bottom rail */}
      <polygon points={band(340, 1082, 427, 435)} fill="#24377c" stroke="#1e3a98" strokeWidth=".8" />
      <path d={`M${at(340, 426)}L${at(1082, 426)}`} stroke="#0a1c6d" strokeWidth="2" />
      <path d={`M${at(342, 429)}L${at(1082, 429)}`} stroke="#3767dc" strokeWidth="1.500" strokeDasharray="1.500 1.500" />
      <path d={`M${at(342, 433)}L${at(1082, 433)}`} stroke="#333a55" strokeWidth="2" />
      {/* posts */}
      <path d="M330 312l11 4v121l-5 5-6-3z" fill="#2b3f86" stroke="#1b3da0" />
      <path d="M337.500 345v92" stroke="#4472dc" strokeWidth="1.400" />
      <path d="M341 345v90" stroke="#0f2a8a" strokeWidth="2" />
      <path d="M331 317v22" stroke="#0d1536" strokeWidth="5" />
      {[0, 1, 2, 3].map((b) => <Post key={b} x={475 + b * 152} y={394 + b * 87.8} />)}
      <path d="M1081 750h12v122l-6 3-6-3z" fill="#2c4aa8" stroke="#1b3da0" />
      <path d="M1083.500 752v115" stroke="#0b143d" strokeWidth="3" />
      <path d="M1090 752v120" stroke="#5877cf" strokeWidth="3" />
      {/* cap */}
      <polygon points={`340,305 ${at(1098, 305)} 1083,751 326,314`} fill="#6c87cc" fillOpacity=".92" stroke="#2145a8" strokeWidth="1.200" />
      <path d={`M326 315L${at(1083, 322)}L1098 744`} fill="none" stroke="#15297a" strokeWidth="1.800" />
      {[0, 1, 2, 3].map((b) => (
        <path key={b} d="M476 397l5-2 12 5v18l-17-9z" transform={`translate(${b * 152} ${b * 87.8})`} fill="#2f4a9f" fillOpacity=".65" stroke="#2b4bb0" strokeWidth=".6" />
      ))}
      <path d="M331 313l10-5v12l-10 4z" fill="#2f4a9f" fillOpacity=".5" />
      {/* handrail */}
      <polygon points={`316,337 ${at(320, 346)} ${at(336, 337)} ${at(1083, 338)} 1084,775 ${at(1078, 352)} ${at(317, 350)}`} fill="#1a2d7c" stroke="#1a3a9c" strokeWidth=".8" />
      <polygon points={`${at(320, 345)} ${at(334, 338)} ${at(1083, 339)} ${at(1080, 345)}`} fill="#6682cc" />
      <path d={`M${at(322, 346)}L${at(1080, 346)}`} stroke="#2c4fb0" strokeWidth="1.500" />
      <path d={`M${at(318, 349)}L${at(1080, 350)}`} stroke="#0f1b52" strokeWidth="3" />
      <path d={`M${at(316, 352)}L${at(1078, 353)}`} stroke="#1c3fb0" />
      {[0, 1, 2, 3].map((b) => (
        <path key={b} d="M476 417l17 10v8l-17-10z" transform={`translate(${b * 152} ${b * 87.8})`} fill="#24398c" fillOpacity=".45" />
      ))}
      <path d="M313 330l3-1 3 4 6-1 6-4 3 4-14 8-4-2z" fill="#4f70cb" stroke="#1a3fae" />
      <path d="M329 313v15M326 314l14-9" stroke="#1a3fae" />
      <path d="M1075 769l9 1v6l-6 2z" fill="#4f7bea" stroke="#123" strokeWidth=".6" />
      <path d="M704 592l8-3 6 4M712 588l5 8M706 589l4 6M714 589l4-2v8" fill="none" stroke="#16306f" />
    </g>
  )
}

function ViewCube() {
  return (
    <g stroke="#9a9a9a" fill="none">
      <ellipse cx="1813" cy="313" rx="64" ry="41" fill="#dcdcdc" fillOpacity=".5" stroke="#b4b4b4" />
      <ellipse cx="1813" cy="309" rx="50" ry="32" fill="#d6d6d6" stroke="#b4b4b4" />
      <path d="M1813 248l34 17-34 20-34-20z" fill="#ececec" />
      <path d="M1779 265l34 20v40l-32-21z" fill="#e2e2e2" />
      <path d="M1847 265l-34 20v40l33-21z" fill="#dadada" />
      <path d="M1851 333l8-5 9 6-9 9zM1855 334l5-2 4 3-5 4zM1848 278l10 3-6 7-4-2z" fill="#ddd" />
      <g fill="#8f8f8f" stroke="none" fontSize="11" textAnchor="middle">
        <text transform="matrix(.85 .45 -.85 .45 1813 269)">TOP</text>
        <text transform="matrix(.72 .44 0 1 1796 299)">FRONT</text>
        <text transform="matrix(.74 -.45 0 1 1830 300)">RIGHT</text>
      </g>
    </g>
  )
}

function NavBar() {
  return (
    <g transform="translate(1868 366)" fill="none" stroke="#9d9d9d">
      <rect x=".5" y=".5" width="34" height="117" rx="5" fill="#d9d9d9" stroke="#aaa" strokeWidth="1.500" />
      <circle cx="27" cy="7" r="3.500" /><path d="M25.500 5.500l3 3M28.500 5.500l-3 3" />
      <rect x="6" y="22" width="18" height="19" rx="6" fill="#e6e6e6" /><circle cx="15" cy="31" r="5" />
      <path d="M18 35l3-2h7v8l-2 3h-8z" fill="#9fc3ea" stroke="#6d9dd0" />
      <path d="M14 51h6l-3 4z" fill="#888" stroke="none" />
      <path d="M4 59h27" />
      <path d="M9 68h11v11H9z" fill="#94bd84" stroke="#7ea56f" /><circle cx="19" cy="77" r="3.500" fill="#eee" /><path d="M21 79l4 4" strokeWidth="2" />
      <path d="M14 93h6l-3 4z" fill="#888" stroke="none" />
      <circle cx="27" cy="110" r="3.500" /><path d="M25 110h4" />
    </g>
  )
}

const viewTools = ['graphic', 'style', 'sun', 'shadow', 'render', 'cropX', 'cropB', 'lockView', 'glasses', 'tip', 'analytic', 'displaceSet', 'constraint', 'dimLock']

function Viewport() {
  return (
    <main className="flex min-w-0 flex-1 flex-col">
      <div className="flex h-[19px] shrink-0 items-center justify-between pr-[3px]">
        <div className="flex h-full w-[128px] items-center bg-white pr-1 pl-[5px] text-[#333]">
          <Ico n="house" className="w-[15px]" />
          <button className="ml-2 flex-1 text-left text-[#c4c4c4]">{'{3D}'}</button>
          <button aria-label="Close view"><X size={14} strokeWidth={2} className="text-black" /></button>
        </div>
        <button aria-label="Views list"><svg width="9" height="8"><path d="M1 1h7" stroke="#222" /><path d="M1 3h7L4.500 7z" fill="#222" /></svg></button>
      </div>
      <div className="flex min-h-0 flex-1 border-t-2 border-l-2 border-white">
        <svg className="h-full min-w-0 flex-1 bg-linear-to-b from-[#f2f2f2] to-[#adadad]" aria-label="3D view">
          <g transform="translate(-223 -194)"><Railing /><ViewCube /><NavBar /></g>
        </svg>
        <div className="flex w-[17px] flex-col items-center bg-[#f0f0f0] pt-[389px]"><div className="h-[17px] w-0.5 bg-[#888]" /></div>
      </div>
      <div className="flex h-5 shrink-0 items-center border-b-2 border-l-2 border-white bg-[#efefef] pb-0.5">
        <button className="ml-[30px] w-[49px] text-left text-black">1 : 1</button>
        <div className="flex gap-[5px]">
          {viewTools.map((n) => <button key={n} aria-label={n} className="flex w-4 justify-center"><Ico n={n} /></button>)}
        </div>
        <div className="flex flex-1 items-center justify-between pl-[649px]">
          <div className="h-0.5 w-[17px] bg-[#888]" />
          <svg width="9" height="9" fill="#aaa"><path d="M6 0h2v2H6zM6 3h2v2H6zM6 6h2v2H6zM3 3h2v2H3zM3 6h2v2H3zM0 6h2v2H0z" /></svg>
        </div>
      </div>
    </main>
  )
}

/* ---------- dialog ---------- */

const groups = [
  ['Construction', [['Railing Height', '0.9150'], ['Rail Structure (Non-Continuous)', 'Edit...'], ['Baluster Offset', '0.0000']]],
  ['Identity Data', ['Type Image', 'Keynote', 'Model', 'Manufacturer', 'Type Comments', 'URL', 'Description', 'Assembly Description', 'Assembly Code', 'Type Mark', 'Cost'].map((k) => [k, ''])],
  ['IFC Parameters', [['Export Type to IFC', 'Default'], ['Export Type to IFC As', '']]],
]
const readOnly = ['Railing Height', 'Assembly Description']
const btn = 'h-[22px] rounded border bg-[#fdfdfd] leading-5'

function TypeProperties() {
  return (
    <div role="dialog" aria-labelledby="type-props" className="absolute top-[230px] right-[140px] flex h-[610px] w-[590px] flex-col overflow-hidden rounded-lg border border-[#a9a9a9] bg-[#f0f0f0] text-black shadow-[0_10px_32px_8px_rgba(0,0,0,0.35)]">
      <div className="flex h-[31px] shrink-0 items-center justify-between bg-[#eff3f8] pr-1.5 pb-0.5 pl-2">
        <h2 id="type-props">Type Properties</h2>
        <button aria-label="Close dialog"><X size={16} strokeWidth={1.500} /></button>
      </div>
      <div className="flex gap-[14px] pt-[10px] pr-[13px] pl-5">
        <div className="flex flex-1 flex-col gap-[10px]">
          {[['Family:', 'System Family: Railing'], ['Type:', 'Parapetto_19']].map(([k, v]) => (
            <div key={k} className="flex items-center">
              <span className="w-[69px]">{k}</span>
              <Select label={k} options={[v]} className="h-[22px] flex-1" chevron="right-1" />
            </div>
          ))}
        </div>
        <div className="flex w-[105px] flex-col gap-[9px] pt-px">
          <button disabled className={`${btn} border-[#e4e4e4] text-[#999]`}>Load...</button>
          <button className={`${btn} border-[#ccc]`}>Duplicate...</button>
          <button className={`${btn} border-[#ccc]`}>Rename...</button>
        </div>
      </div>
      <h3 className="mt-[7px] h-5 pl-5 leading-[16px]">Type Parameters</h3>
      <div className="mr-[13px] ml-5 flex h-[376px] shrink-0 overflow-hidden border-t-2 border-l border-[#767676]">
        <table className="w-[536px] table-fixed border-separate border-spacing-0 self-start bg-white">
          <colgroup><col className="w-[253px]" /><col className="w-[270px]" /><col className="w-[13px]" /></colgroup>
          <thead>
            <tr className="h-[22px] bg-[#f0f0f0]">
              {['Parameter', 'Value', '='].map((h) => <th key={h} className="border-r border-b border-black p-0 font-normal">{h}</th>)}
            </tr>
          </thead>
          {groups.map(([title, rows]) => (
            <tbody key={title}>
              <tr className="h-[3px]"><td colSpan={3} className="p-0" /></tr>
              <tr className="h-[19px] bg-[#9ab3d0]">
                <th colSpan={2} className="p-0 pl-[3px] text-left align-top leading-[17px] font-bold">{title}</th>
                <td className="p-0"><button aria-label={`Collapse ${title}`} className="block"><Chevrons /></button></td>
              </tr>
              {rows.map(([k, v]) => (
                <tr key={k} className={`h-[18px] ${readOnly.includes(k) ? 'text-[#808080]' : ''}`}>
                  <td className={`${cell} pl-[3px]`}>{k}</td>
                  <td className={`${cell} pl-0.5`}>
                    {v === 'Edit...' ? <button className="mt-px block h-[15px] w-[265px] rounded-xs border border-[#ccc] border-b-[#aaa] leading-[13px]">{v}</button> : v}
                  </td>
                  <td className={cell} />
                </tr>
              ))}
            </tbody>
          ))}
        </table>
        <div className="mt-[17px] ml-2 h-[231px] w-0.5 bg-[#888]" />
      </div>
      <a href="#what" className="mt-[11px] ml-5 self-start text-[#2063ad] underline">What do these properties do?</a>
      <div className="mt-[17px] flex gap-2 pr-3 pl-5">
        <button className={`${btn} w-[88px] border-[#ccc]`}>&lt;&lt; Preview</button>
        <button className={`${btn} ml-auto w-[88px] border-[#1a75b5]`}>OK</button>
        <button className={`${btn} w-[88px] border-[#ccc]`}>Cancel</button>
        <button disabled className={`${btn} w-[88px] border-[#ececec] text-[#999]`}>Apply</button>
      </div>
    </div>
  )
}

/* ---------- status bar ---------- */

function StatusBar() {
  return (
    <footer className="flex h-6 shrink-0 items-center pr-[72px] text-[#222]">
      <span className="w-[897px] pl-0.5">Ready</span>
      <Ico n="people" />
      <Select label="Workset" options={['']} className="ml-2 h-[18px] w-[204px] text-[#888]" chevron="right-0.5" />
      <Ico n="request" className="ml-2.5" />
      <span className="ml-0.5 w-[34px]">:0</span>
      <Ico n="block" />
      <Ico n="blockOut" className="ml-2.5" />
      <Select label="Design option" options={['Main Model']} className="ml-2 h-[18px] w-[204px] text-[#888]" chevron="right-0.5" />
      <div className="ml-auto flex items-center gap-2.5">
        {['selLink', 'selUnder', 'selPin', 'selFace', 'drag', 'gear'].map((n) => <button key={n} aria-label={n}><Ico n={n} /></button>)}
        <button className="flex items-center"><Ico n="funnel" />:1</button>
      </div>
    </footer>
  )
}

export default function App() {
  return (
    <div className={`relative flex h-screen flex-col overflow-hidden bg-[#cbcbcb] text-[11px] ${ui}`}>
      <TitleBar />
      <Tabs />
      <Ribbon />
      <div className="h-[26px] shrink-0 bg-[#e5efd6] pl-2 leading-[27px] text-black">Modify | Railings</div>
      <div className="flex min-h-0 flex-1 pt-0.5">
        <aside className="mr-0.5 flex w-[219px] shrink-0 flex-col bg-[#f0f0f0]">
          <Properties />
          <Browser />
        </aside>
        <Viewport />
      </div>
      <StatusBar />
      <div className="flex h-2 shrink-0 items-end border-t border-[#3a4440] bg-linear-to-r from-[#3a2010] via-[#1a1c1c] to-[#14343a]">
        <span className="ml-[1094px] h-1 w-[19px] rounded-t-full bg-[#3aa6dd]" />
        <span className="ml-[95px] h-1.5 w-[38px] rounded-t bg-[#3c4b50]" />
      </div>
      <TypeProperties />
    </div>
  )
}
